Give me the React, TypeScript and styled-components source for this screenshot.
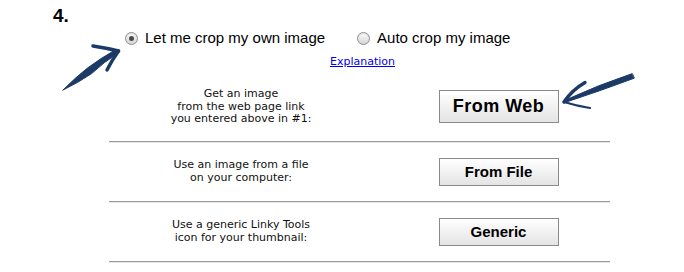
import React from 'react';
import styled, { createGlobalStyle } from 'styled-components';

// --- Styled Components ---

const GlobalStyle = createGlobalStyle`
  body {
    margin: 0;
    background: #ffffff;
  }
`;

const Page = styled.div`
  position: relative;
  width: 684px;
  height: 272px;
  overflow: hidden;
  font-family: 'DejaVu Sans', Verdana, sans-serif;
  color: #111;
`;

const StepNumber = styled.h2`
  margin: 0;
  padding: 6px 0 0 53px;
  font-family: 'Liberation Sans', Arial, sans-serif;
  font-size: 19px;
  line-height: 20px;
  font-weight: 700;
  color: #000;
`;

const RadioRow = styled.div`
  display: flex;
  align-items: center;
  height: 18px;
  margin-top: 3px;
  padding-left: 125px;
  font-family: 'Liberation Sans', Arial, sans-serif;
  font-size: 15px;
  line-height: 18px;
  color: #000;
`;

const Option = styled.label`
  display: flex;
  align-items: center;
  gap: 7px;
  margin-right: 32px;
`;

const Radio = styled.span<{ $checked?: boolean }>`
  display: flex;
  align-items: center;
  justify-content: center;
  box-sizing: border-box;
  width: 13px;
  height: 13px;
  border-radius: 50%;
  border: 1px solid #8e8e8e;
  background: linear-gradient(#fefefe, #d4d4d4);
  box-shadow: inset 0 1px 1px rgba(0, 0, 0, 0.12);

  &::after {
    content: '';
    display: ${p => (p.$checked ? 'block' : 'none')};
    width: 5px;
    height: 5px;
    border-radius: 50%;
    background: #4a4a4a;
  }
`;

const Explanation = styled.a`
  display: block;
  margin-top: 8px;
  padding-left: 330px;
  font-size: 11px;
  line-height: 13px;
  color: #0000ee;
  text-decoration: underline;
`;

const SourceTable = styled.div`
  margin-top: 5px;
`;

const SourceRow = styled.div`
  display: grid;
  grid-template-columns: 278px 223px;
  align-items: center;
  margin-left: 109px;
  padding: 15px 0;
`;

const Description = styled.div`
  padding-right: 14px;
  text-align: center;
  font-size: 11px;
  line-height: 12.5px;
  color: #111;
`;

const SourceButton = styled.button<{ $big?: boolean }>`
  justify-self: center;
  width: 120px;
  height: ${p => (p.$big ? '33px' : '28px')};
  padding: 0;
  border: 1px solid #8a8a8a;
  border-radius: 0;
  background: linear-gradient(#ffffff, #e4e4e4);
  font-family: 'Liberation Sans', Arial, sans-serif;
  font-weight: 700;
  font-size: ${p => (p.$big ? '18px' : '15px')};
  letter-spacing: ${p => (p.$big ? '0.5px' : '0')};
  color: #000;
`;

const Divider = styled.div`
  width: 501px;
  margin-left: 109px;
  border-top: 1px solid #9b9b9b;
  border-bottom: 1px solid #e6e6e6;
`;

const Annotations = styled.svg`
  position: absolute;
  top: 0;
  left: 0;
  pointer-events: none;
`;

// --- Data ---

const sources = [
  { lines: ['Get an image', 'from the web page link', 'you entered above in #1:'], label: 'From Web', big: true },
  { lines: ['Use an image from a file', 'on your computer:'], label: 'From File' },
  { lines: ['Use a generic Linky Tools', 'icon for your thumbnail:'], label: 'Generic' },
];

// --- Main Component ---

const App: React.FC = () => {
  return (
    <Page>
      <GlobalStyle />
      <StepNumber>4.</StepNumber>

      <RadioRow>
        <Option>
          <Radio $checked />
          Let me crop my own image
        </Option>
        <Option>
          <Radio />
          Auto crop my image
        </Option>
      </RadioRow>

      <Explanation href="#">Explanation</Explanation>

      <SourceTable>
        {sources.map(s => (
          <React.Fragment key={s.label}>
            <SourceRow>
              <Description>
                {s.lines.map((l, i) => (
                  <React.Fragment key={i}>
                    {l}
                    {i < s.lines.length - 1 && <br />}
                  </React.Fragment>
                ))}
              </Description>
              <SourceButton $big={s.big}>{s.label}</SourceButton>
            </SourceRow>
            <Divider />
          </React.Fragment>
        ))}
      </SourceTable>

      {/* hand-drawn brush arrows */}
      <Annotations width="684" height="272" viewBox="0 0 684 272">
        <g fill="#1c3a66" stroke="#1c3a66" strokeWidth="1" strokeLinecap="round" strokeLinejoin="round">
          <path d="M63 90 Q76 77 87.5 68 Q101 58 114.8 50.2 L117.2 53.6 Q104 62 91.6 73.6 Q78 83 63 90 Z" />
          <path d="M93 46 Q106 48 118.5 51" fill="none" strokeWidth="3.5" />
          <path d="M118.5 51 Q112 60 107 70" fill="none" strokeWidth="3.5" />

          <path d="M632 73.7 Q598 85 565.6 100 L566.4 102 Q600 91 634 78.3 Z" />
          <path d="M585 82.5 Q572 90 564 102" fill="none" strokeWidth="3.5" />
          <path d="M564 102 Q577 106 590 108" fill="none" strokeWidth="2.2" />
        </g>
      </Annotations>
    </Page>
  );
};

export default App;
